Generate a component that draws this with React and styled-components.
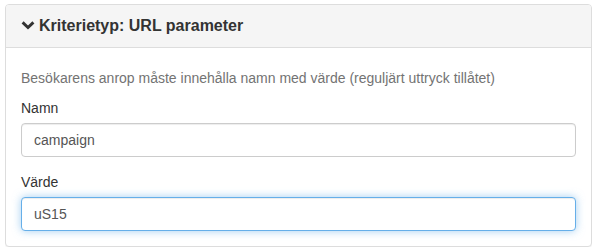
import React from "react";
import styled, { createGlobalStyle } from "styled-components";

const Global = createGlobalStyle`
  * { box-sizing: border-box; }
  body {
    margin: 4px 6px 0 5px;
    background: #fff;
    font-family: "Liberation Sans", Arial, sans-serif;
    font-size: 14px;
    line-height: 20px;
    color: #333;
  }
`;

const Panel = styled.div`
  border: 1px solid #ddd;
  border-radius: 4px;
  background: #fff;
  box-shadow: 0 1px 1px rgba(0, 0, 0, 0.05);
`;

const Heading = styled.div`
  display: flex;
  align-items: center;
  gap: 4px;
  height: 43px;
  padding: 0 15px;
  background: #f5f5f5;
  border-bottom: 1px solid #ddd;
  border-radius: 3px 3px 0 0;
`;

const Title = styled.h3`
  margin: 0;
  font-size: 16px;
  font-weight: bold;
  color: #333;
  line-height: 20px;
`;

const Body = styled.div`
  padding: 15px;
`;

const Help = styled.p`
  margin: 5px 0 10px;
  color: #737373;
`;

const Group = styled.div`
  margin-bottom: ${(p) => (p.$last ? "0" : "15px")};
`;

const Label = styled.label`
  display: block;
  margin-bottom: 5px;
  font-weight: normal;
  color: #333;
`;

const Input = styled.input`
  display: block;
  width: 100%;
  height: 34px;
  padding: 6px 12px;
  font-family: inherit;
  font-size: 14px;
  color: #555;
  background: #fff;
  border: 1px solid ${(p) => (p.$focused ? "#66afe9" : "#ccc")};
  border-radius: 4px;
  outline: none;
  box-shadow: ${(p) =>
    p.$focused
      ? "inset 0 1px 1px rgba(0,0,0,.075), 0 0 8px rgba(102,175,233,.6)"
      : "inset 0 1px 1px rgba(0,0,0,.075)"};
`;

const Chevron = () => (
  <svg width="14" height="14" viewBox="0 0 14 14">
    <polyline
      points="1.6,3.4 7,8.6 12.4,3.4"
      fill="none"
      stroke="#333"
      strokeWidth="2.9"
      strokeLinecap="butt"
      strokeLinejoin="miter"
    />
  </svg>
);

export default function App() {
  return (
    <>
      <Global />
      <Panel>
        <Heading>
          <Chevron />
          <Title>Kriterietyp: URL parameter</Title>
        </Heading>
        <Body>
          <Help>
            Besökarens anrop måste innehålla namn med värde (reguljärt uttryck tillåtet)
          </Help>
          <Group>
            <Label>Namn</Label>
            <Input defaultValue="campaign" readOnly />
          </Group>
          <Group $last>
            <Label>Värde</Label>
            <Input defaultValue="uS15" $focused readOnly />
          </Group>
        </Body>
      </Panel>
    </>
  );
}
